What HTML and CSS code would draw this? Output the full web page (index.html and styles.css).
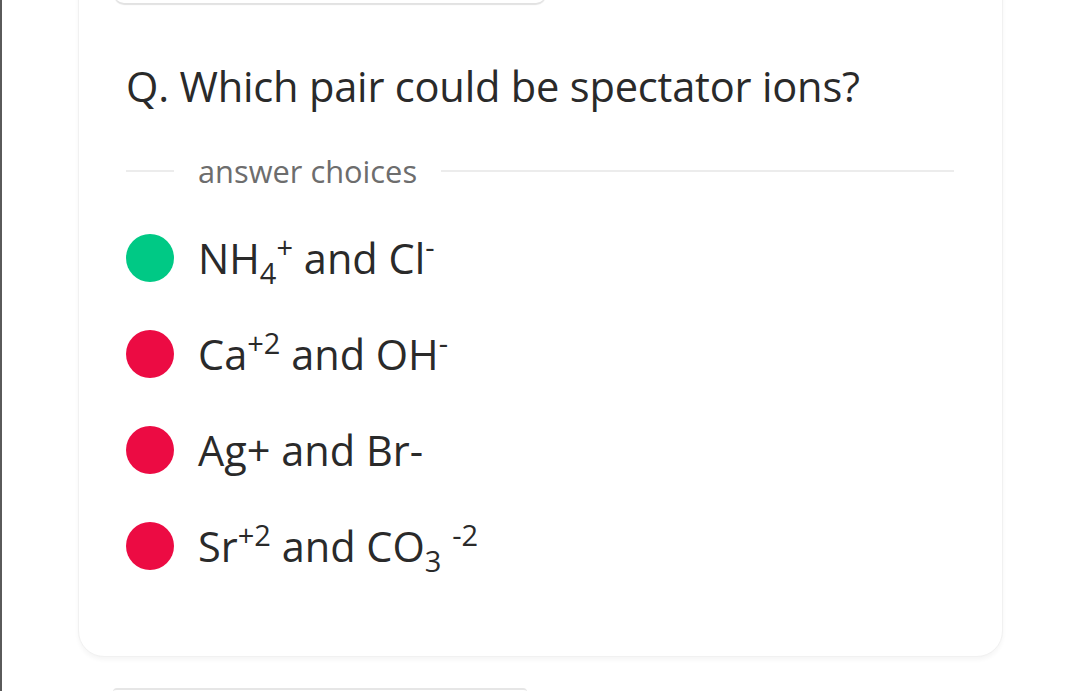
FILE: index.html
```html
<!DOCTYPE html>
<html>
<head>
<meta charset="utf-8">
<link rel="stylesheet" href="styles.css">
</head>
<body>
<div class="screen">
  <div class="card">
    <div class="prev-pill"></div>
    <h1 class="question">Q. Which pair could be spectator ions?</h1>
    <div class="divider">
      <span class="rule rule-short"></span>
      <span class="divider-label">answer choices</span>
      <span class="rule rule-long"></span>
    </div>
    <ul class="choices">
      <li class="choice"><span class="dot dot-correct"></span><span class="choice-text">NH<sub>4</sub><sup>+</sup> and Cl<sup>-</sup></span></li>
      <li class="choice"><span class="dot dot-wrong"></span><span class="choice-text">Ca<sup>+2</sup> and OH<sup>-</sup></span></li>
      <li class="choice"><span class="dot dot-wrong"></span><span class="choice-text">Ag+ and Br-</span></li>
      <li class="choice"><span class="dot dot-wrong"></span><span class="choice-text">Sr<sup>+2</sup> and CO<sub>3</sub> <sup>-2</sup></span></li>
    </ul>
  </div>
  <div class="next-pill"></div>
</div>
</body>
</html>
```

FILE: styles.css
```css
html, body {
  margin: 0;
  padding: 0;
  background: #ffffff;
}

.screen {
  box-sizing: border-box;
  height: 691px;
  overflow: hidden;
  border-left: 2px solid #5a5a5a;
  padding-left: 76px;
  font-family: "Open Sans", "Noto Sans", sans-serif;
  color: #2a2a2a;
}

.card {
  box-sizing: border-box;
  width: 925px;
  margin-top: -40px;
  padding: 10px 48px 86px 47px;
  background: #ffffff;
  border: 1px solid #f1f1f1;
  border-radius: 26px;
  box-shadow: 0 3px 4px rgba(0, 0, 0, 0.04);
}

.prev-pill {
  width: 432px;
  height: 32px;
  margin-left: -12px;
  border-radius: 0 0 10px 10px;
  background: #ffffff;
  box-shadow: 0 2px 1px #e2e2e2;
}

.question {
  margin: 55px 0 0 0;
  font-size: 41.6px;
  font-weight: 400;
  line-height: 56px;
  letter-spacing: -0.2px;
}

.divider {
  display: flex;
  align-items: center;
  gap: 24px;
  margin-top: 37px;
  height: 40px;
}

.rule {
  height: 2px;
  background: #ececec;
}

.rule-short {
  width: 48px;
}

.rule-long {
  flex: 1;
}

.divider-label {
  font-size: 30.8px;
  color: #6d6d6d;
}

.choices {
  list-style: none;
  margin: 43px 0 0 0;
  padding: 0;
  display: flex;
  flex-direction: column;
  gap: 48px;
}

.choice {
  display: flex;
  align-items: center;
  gap: 24px;
  height: 48px;
}

.dot {
  flex: none;
  width: 48px;
  height: 48px;
  border-radius: 50%;
}

.dot-correct {
  background: #00c985;
}

.dot-wrong {
  background: #ec0b43;
}

.choice-text {
  font-size: 41.5px;
  line-height: 48px;
  white-space: nowrap;
}

.choice-text sup,
.choice-text sub {
  font-size: 29px;
  line-height: 0;
}

.choice-text sup {
  vertical-align: 0.55em;
}

.choice-text sub {
  vertical-align: -0.35em;
}

.next-pill {
  width: 414px;
  height: 20px;
  margin: 31px 0 0 35px;
  border-top: 2px solid #e6e6e6;
  border-radius: 4px 4px 0 0;
}
```
